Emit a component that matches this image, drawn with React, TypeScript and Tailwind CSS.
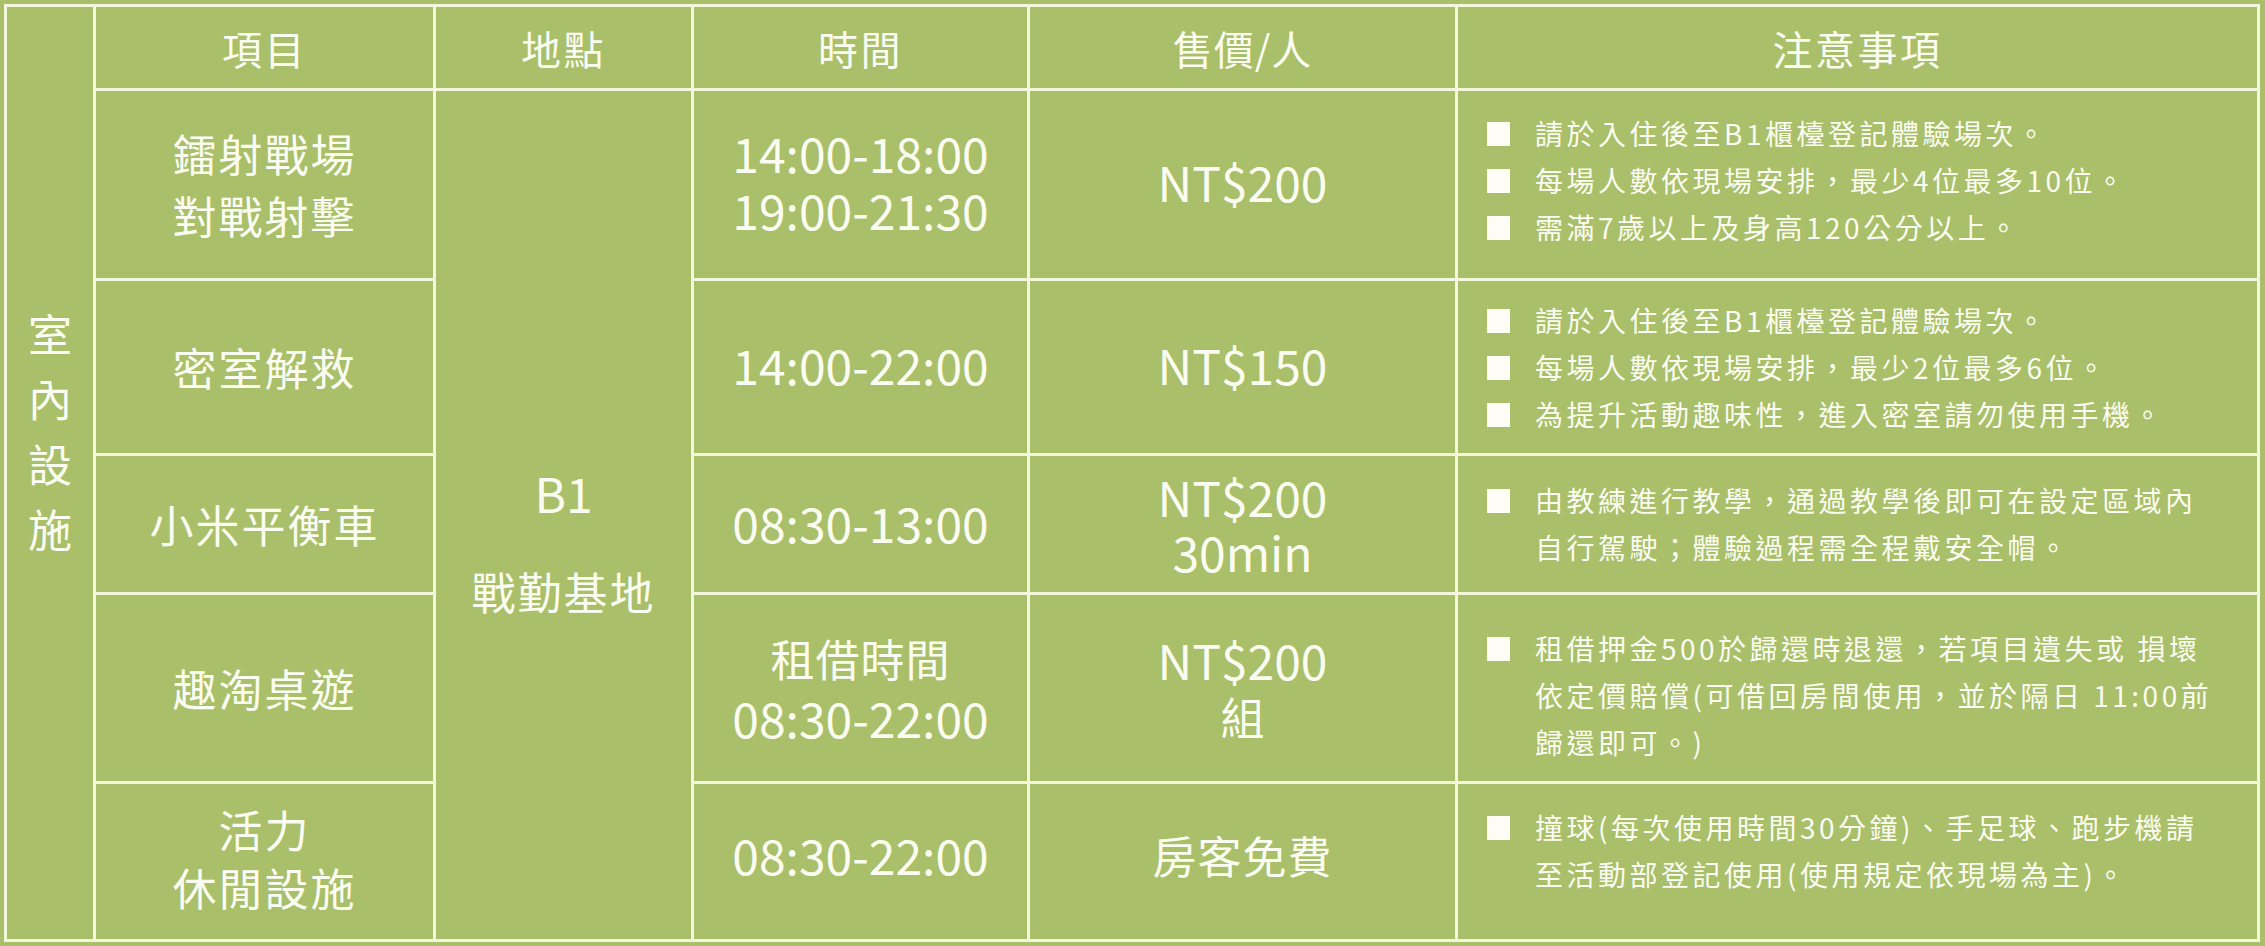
import React from "react";

const cell = "bg-[#a9bf69] flex items-center justify-center text-center";

function Note({ lines }: { lines: string[] }) {
  return (
    <div className="flex items-start gap-[25px]">
      <div className="w-[23px] h-[24px] bg-[#fdfdf6] mt-[12px] shrink-0" />
      <div className="flex flex-col">
        {lines.map((l, i) => (
          <div key={i} className="whitespace-nowrap leading-[47px]">
            {l}
          </div>
        ))}
      </div>
    </div>
  );
}

function Notes({ items, extra = "" }: { items: string[][]; extra?: string }) {
  return (
    <div
      className={`bg-[#a9bf69] flex flex-col justify-center pl-[29px] text-[28px] tracking-[3.5px] ${extra}`}
    >
      {items.map((lines, i) => (
        <Note key={i} lines={lines} />
      ))}
    </div>
  );
}

export default function App() {
  return (
    <div className="w-[2265px] h-[946px] bg-[#a9bf69] pt-[4px] pl-[4px] font-['Noto_Sans_CJK_TC','Noto_Sans',sans-serif] text-[#fbfcf1]">
      <div className="grid w-fit grid-cols-[86px_337px_255px_333px_425px_799px] grid-rows-[81px_187px_172px_136px_186px_155px] gap-[3px] p-[3px] bg-[#f3f7dc]">
        {/* column 0 */}
        <div className={`${cell} col-start-1 row-start-1 row-span-6 flex-col pb-[84px] text-[44px] leading-[65px]`}>
          <div>室</div>
          <div>內</div>
          <div>設</div>
          <div>施</div>
        </div>

        {/* header */}
        <div className={`${cell} col-start-2 row-start-1 text-[40px] tracking-[2.5px]`}>項目</div>
        <div className={`${cell} col-start-3 row-start-1 text-[40px] tracking-[2.5px]`}>地點</div>
        <div className={`${cell} col-start-4 row-start-1 text-[40px] tracking-[2.5px]`}>時間</div>
        <div className={`${cell} col-start-5 row-start-1 text-[40px] tracking-[1px]`}>售價/人</div>
        <div className={`${cell} col-start-6 row-start-1 text-[40px] tracking-[2.5px]`}>注意事項</div>

        {/* location */}
        <div className={`${cell} col-start-3 row-start-2 row-span-5 flex-col pt-[53px]`}>
          <div className="text-[48px] leading-[48px]">B1</div>
          <div className="text-[44px] leading-[48px] mt-[51px] tracking-[2px]">戰勤基地</div>
        </div>

        {/* row 1 */}
        <div className={`${cell} col-start-2 row-start-2 flex-col pb-[2px] text-[44px] leading-[62px] tracking-[2px]`}>
          <div>鐳射戰場</div>
          <div>對戰射擊</div>
        </div>
        <div className={`${cell} col-start-4 row-start-2 flex-col pb-[8px] text-[48px] leading-[57px]`}>
          <div>14:00-18:00</div>
          <div>19:00-21:30</div>
        </div>
        <div className={`${cell} col-start-5 row-start-2 pb-[8px] text-[48px]`}>NT$200</div>
        <Notes
          extra="col-start-6 row-start-2 pb-[8px]"
          items={[
            ["請於入住後至B1櫃檯登記體驗場次。"],
            ["每場人數依現場安排，最少4位最多10位。"],
            ["需滿7歲以上及身高120公分以上。"],
          ]}
        />

        {/* row 2 */}
        <div className={`${cell} col-start-2 row-start-3 text-[44px] tracking-[2px]`}>密室解救</div>
        <div className={`${cell} col-start-4 row-start-3 pb-[6px] text-[48px]`}>14:00-22:00</div>
        <div className={`${cell} col-start-5 row-start-3 pb-[6px] text-[48px]`}>NT$150</div>
        <Notes
          extra="col-start-6 row-start-3"
          items={[
            ["請於入住後至B1櫃檯登記體驗場次。"],
            ["每場人數依現場安排，最少2位最多6位。"],
            ["為提升活動趣味性，進入密室請勿使用手機。"],
          ]}
        />

        {/* row 3 */}
        <div className={`${cell} col-start-2 row-start-4 text-[44px] tracking-[2px]`}>小米平衡車</div>
        <div className={`${cell} col-start-4 row-start-4 pb-[4px] text-[48px]`}>08:30-13:00</div>
        <div className={`${cell} col-start-5 row-start-4 flex-col text-[48px] leading-[55px]`}>
          <div>NT$200</div>
          <div>30min</div>
        </div>
        <Notes
          extra="col-start-6 row-start-4"
          items={[["由教練進行教學，通過教學後即可在設定區域內", "自行駕駛；體驗過程需全程戴安全帽。"]]}
        />

        {/* row 4 */}
        <div className={`${cell} col-start-2 row-start-5 text-[44px] tracking-[2px]`}>趣淘桌遊</div>
        <div className={`${cell} col-start-4 row-start-5 flex-col leading-[59px]`}>
          <div className="text-[44px] tracking-[1px]">租借時間</div>
          <div className="text-[48px]">08:30-22:00</div>
        </div>
        <div className={`${cell} col-start-5 row-start-5 flex-col leading-[57px]`}>
          <div className="text-[48px]">NT$200</div>
          <div className="text-[44px]">組</div>
        </div>
        <Notes
          extra="col-start-6 row-start-5 pt-[14px]"
          items={[
            [
              "租借押金500於歸還時退還，若項目遺失或 損壞",
              "依定價賠償(可借回房間使用，並於隔日 11:00前",
              "歸還即可。)",
            ],
          ]}
        />

        {/* row 5 */}
        <div className={`${cell} col-start-2 row-start-6 flex-col pb-[8px] text-[44px] leading-[58px] tracking-[2px]`}>
          <div>活力</div>
          <div>休閒設施</div>
        </div>
        <div className={`${cell} col-start-4 row-start-6 pb-[16px] text-[48px]`}>08:30-22:00</div>
        <div className={`${cell} col-start-5 row-start-6 pb-[14px] text-[44px] tracking-[1px]`}>房客免費</div>
        <Notes
          extra="col-start-6 row-start-6 pb-[22px]"
          items={[["撞球(每次使用時間30分鐘)、手足球、跑步機請", "至活動部登記使用(使用規定依現場為主)。"]]}
        />
      </div>
    </div>
  );
}
